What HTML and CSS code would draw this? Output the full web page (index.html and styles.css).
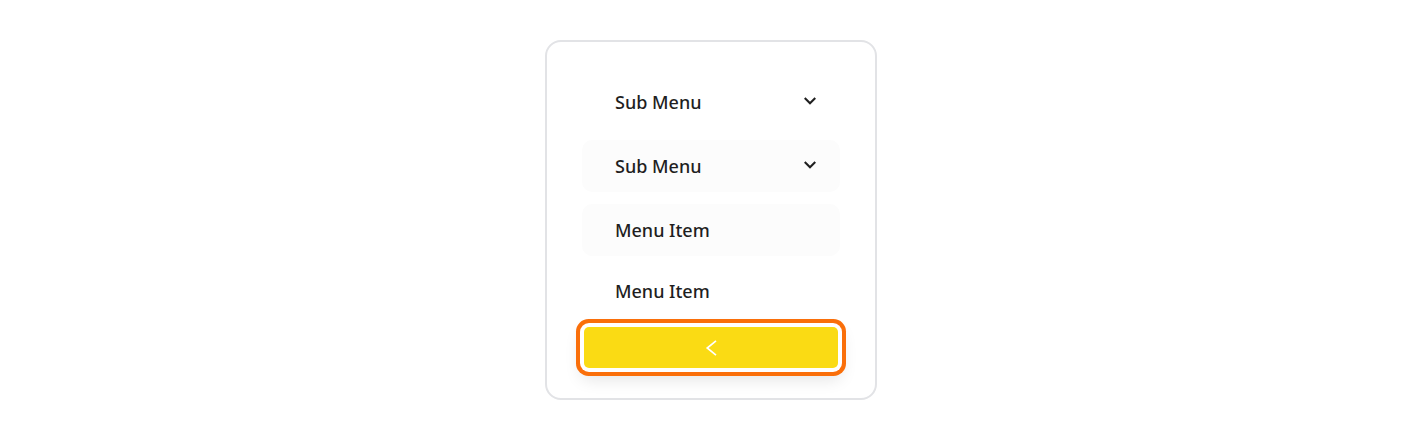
FILE: index.html
```html
<!DOCTYPE html>
<html>
<head>
<meta charset="utf-8">
<link rel="stylesheet" href="styles.css">
</head>
<body>
<div class="stage">
  <div class="card">
    <ul class="menu">
      <li class="item">
        <span class="label">Sub Menu</span>
        <svg class="chev" viewBox="0 0 16 16" width="16" height="16"><path d="M3.5 5.8 L8 10.2 L12.5 5.8" fill="none" stroke="#1f1f1f" stroke-width="2.1" stroke-linecap="square"/></svg>
      </li>
      <li class="item shaded">
        <span class="label">Sub Menu</span>
        <svg class="chev" viewBox="0 0 16 16" width="16" height="16"><path d="M3.5 5.8 L8 10.2 L12.5 5.8" fill="none" stroke="#1f1f1f" stroke-width="2.1" stroke-linecap="square"/></svg>
      </li>
      <li class="item shaded">
        <span class="label">Menu Item</span>
      </li>
      <li class="item last">
        <span class="label">Menu Item</span>
      </li>
    </ul>
    <button class="collapse" type="button" aria-label="Collapse">
      <svg viewBox="0 0 14 18" width="14" height="18"><path d="M12 1.8 L3.2 9 L12 16.2" fill="none" stroke="#ffffff" stroke-width="1.7"/></svg>
    </button>
  </div>
</div>
</body>
</html>
```

FILE: styles.css
```css
* { box-sizing: border-box; }
html, body { margin: 0; padding: 0; background: #ffffff; }
body { font-family: "Noto Sans", "Open Sans", sans-serif; }
.stage {
  height: 440px;
  display: flex;
  align-items: center;
  justify-content: center;
}
.card {
  width: 332px;
  height: 360px;
  border: 2px solid #e2e3e6;
  border-radius: 16px;
  padding: 34px 35px 30px;
  display: flex;
  flex-direction: column;
}
.menu {
  list-style: none;
  margin: 0;
  padding: 0;
  display: flex;
  flex-direction: column;
  gap: 12px;
}
.item {
  height: 52px;
  border-radius: 10px;
  display: flex;
  align-items: center;
  justify-content: space-between;
  padding: 0 22px 0 33px;
  color: #1f1f1f;
  font-size: 18px;
  font-weight: 500;
}
.item.shaded { background: #fcfcfc; }
.item.last { margin-top: -3px; }
.label { line-height: 1; }
.chev { display: block; margin-top: -2px; }
.collapse {
  margin: 10px 2px 0;
  height: 41px;
  border: none;
  border-radius: 5px;
  background: #fadb14;
  display: flex;
  align-items: center;
  justify-content: center;
  padding: 0;
  box-shadow: 0 0 0 4px #ffffff, 0 0 0 8px #fa6f0a, 0 8px 16px 4px rgba(0,0,0,0.10);
}
.collapse svg { display: block; }
```
